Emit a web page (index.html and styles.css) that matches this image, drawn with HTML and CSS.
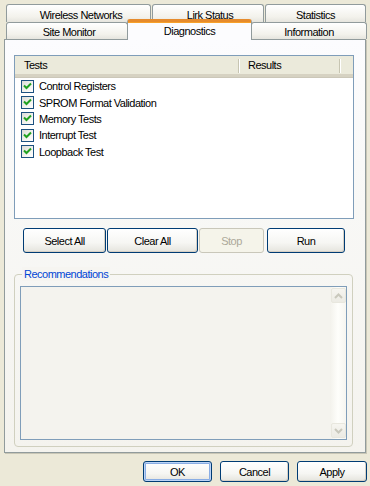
FILE: index.html
```html
<!DOCTYPE html>
<html>
<head>
<meta charset="utf-8">
<link rel="stylesheet" href="styles.css">
</head>
<body>
<div class="dialog">
  <div class="tabs">
    <div class="tabrow row1">
      <div class="tab t-wireless">Wireless Networks</div>
      <div class="tab t-link">Lirk Status</div>
      <div class="tab t-stats">Statistics</div>
    </div>
    <div class="tabrow row2">
      <div class="tab t-site">Site Monitor</div>
      <div class="tab t-diag selected">Diagnostics</div>
      <div class="tab t-info">Information</div>
    </div>
  </div>
  <div class="panel">
    <div class="list">
      <div class="list-head">
        <div class="col col-tests">Tests</div>
        <div class="col col-results">Results</div>
        <div class="col col-rest"></div>
      </div>
      <div class="rows">
        <div class="row"><span class="check"><svg width="11" height="11" viewBox="0 0 11 11"><path d="M2 4.5 L4.5 7 L9 2.5" fill="none" stroke="#21a121" stroke-width="2"/></svg></span>Control Registers</div>
        <div class="row"><span class="check"><svg width="11" height="11" viewBox="0 0 11 11"><path d="M2 4.5 L4.5 7 L9 2.5" fill="none" stroke="#21a121" stroke-width="2"/></svg></span>SPROM Format Validation</div>
        <div class="row"><span class="check"><svg width="11" height="11" viewBox="0 0 11 11"><path d="M2 4.5 L4.5 7 L9 2.5" fill="none" stroke="#21a121" stroke-width="2"/></svg></span>Memory Tests</div>
        <div class="row"><span class="check"><svg width="11" height="11" viewBox="0 0 11 11"><path d="M2 4.5 L4.5 7 L9 2.5" fill="none" stroke="#21a121" stroke-width="2"/></svg></span>Interrupt Test</div>
        <div class="row"><span class="check"><svg width="11" height="11" viewBox="0 0 11 11"><path d="M2 4.5 L4.5 7 L9 2.5" fill="none" stroke="#21a121" stroke-width="2"/></svg></span>Loopback Test</div>
      </div>
    </div>
    <div class="actions">
      <button class="btn b-select">Select All</button>
      <button class="btn b-clear">Clear All</button>
      <button class="btn b-stop" disabled>Stop</button>
      <button class="btn b-run">Run</button>
    </div>
    <div class="group">
      <span class="legend">Recommendations</span>
      <div class="textarea">
        <div class="scrollbar">
          <div class="sbtn"><svg width="9" height="6" viewBox="0 0 9 6"><path d="M1 5 L4.5 1.5 L8 5" fill="none" stroke="#c9c8bc" stroke-width="2"/></svg></div>
          <div class="strack"></div>
          <div class="sbtn"><svg width="9" height="6" viewBox="0 0 9 6"><path d="M1 1 L4.5 4.5 L8 1" fill="none" stroke="#c9c8bc" stroke-width="2"/></svg></div>
        </div>
      </div>
    </div>
  </div>
  <div class="footer">
    <button class="btn fb default">OK</button>
    <button class="btn fb">Cancel</button>
    <button class="btn fb f-apply">Apply</button>
  </div>
</div>
</body>
</html>
```

FILE: styles.css
```css
* { box-sizing: border-box; }
html, body {
  margin: 0;
  padding: 0;
  width: 370px;
  height: 486px;
  overflow: hidden;
  background: #ECE9D8;
  font-family: "Liberation Sans", Arial, sans-serif;
  font-size: 11px;
  letter-spacing: -0.5px;
  color: #000;
}
.dialog { width: 370px; height: 486px; }

/* tabs */
.tabs { height: 39px; position: relative; z-index: 2; }
.tabrow { display: flex; padding-left: 6px; }
.row1 { padding-top: 4px; height: 22px; gap: 1px; }
.row2 { height: 17px; gap: 1px; }
.tab {
  border: 1px solid #919B9C;
  border-bottom: none;
  border-radius: 3px 3px 0 0;
  background: linear-gradient(#FFFFFF, #F3F2EC 70%, #E6E5DE);
  display: flex;
  align-items: center;
  justify-content: center;
  white-space: nowrap;
}
.row1 .tab { height: 18px; padding-top: 2px; }
.row2 .tab { height: 17px; padding-top: 1px; }
.t-wireless { width: 145px; padding-left: 5px; }
.t-link { width: 112px; padding-left: 4px; }
.t-stats { width: 101px; }
.t-site { width: 122px; padding-left: 4px; }
.t-info { width: 116px; }
.t-diag { width: 121px; }
.row2 .tab.selected {
  position: relative;
  width: 125px;
  height: 21px;
  margin: -3px -2px 0 -2px;
  background: #FCFCFE;
  border-top: 3px solid #FFC83C;
  box-shadow: inset 0 1px 0 #F7A12A;
  border-color: #F0B060 #919B9C #919B9C #919B9C;
  border-top-color: #E68B2C;
  align-items: flex-start;
  padding-top: 3px;
  z-index: 3;
}

/* panel */
.panel {
  margin-left: 4px;
  width: 362px;
  height: 414px;
  border: 1px solid #919B9C;
  box-shadow: 1px 1px 0 #C8C6B6;
  background: linear-gradient(#FCFCFE, #F8F8F6 40%, #F4F3EE);
  padding: 15px 0 0 9px;
}

.list {
  width: 340px;
  height: 164px;
  border: 1px solid #7F9DB9;
  background: #FFFFFF;
}
.list-head {
  display: flex;
  height: 21px;
  background: #EBEADB;
  border-bottom: 3px solid #D6D2C2;
  box-shadow: 0 1px 0 #CBC7B8;
}
.col {
  height: 18px;
  display: flex;
  align-items: center;
  padding-left: 9px;
  position: relative;
}
.col-tests { width: 224px; }
.col-results { width: 101px; }
.col-rest { flex: 1; }
.col-tests::after, .col-results::after {
  content: "";
  position: absolute;
  right: 0;
  top: 3px;
  height: 14px;
  width: 1px;
  background: #C7C5B2;
  box-shadow: 1px 0 0 #FFFFFF;
}
.rows { padding-top: 1px; padding-left: 6px; }
.row {
  height: 16.4px;
  display: flex;
  align-items: center;
  white-space: nowrap;
}
.check {
  width: 13px;
  height: 13px;
  border: 1px solid #1C5180;
  background: linear-gradient(135deg, #DCDCD7, #F4F4F0 60%, #FFFFFF);
  margin-right: 5px;
  display: flex;
  align-items: center;
  justify-content: center;
  flex: none;
}

/* buttons */
.actions {
  display: flex;
  margin: 9px 0 0 9px;
  gap: 1px;
}
.btn {
  font-family: "Liberation Sans", Arial, sans-serif;
  font-size: 11px;
  letter-spacing: -0.5px;
  color: #000;
  height: 25px;
  border: 1px solid #003C74;
  border-radius: 3px;
  background: linear-gradient(#FFFFFF, #F6F6F3 60%, #E5E4DD);
  box-shadow: inset -1px -1px 0 #D6D0C5;
  padding: 0;
  margin: 0;
}
.b-select { width: 83px; }
.b-clear { width: 91px; }
.b-stop { width: 65px; }
.b-run { width: 78px; margin-left: 2px; }
.btn:disabled {
  color: #ACA899;
  border-color: #C9C7BA;
  background: #F5F4EA;
  box-shadow: none;
}

/* group */
.group {
  position: relative;
  margin-top: 21px;
  width: 339px;
  height: 173px;
  border: 1px solid #D0D0BF;
  border-radius: 4px;
  padding: 11px 0 0 5px;
}
.legend {
  position: absolute;
  left: 7px;
  top: -8px;
  padding: 0 2px;
  background: #F6F5F1;
  color: #0046D5;
  line-height: 14px;
}
.textarea {
  width: 327px;
  height: 154px;
  border: 1px solid #7F9DB9;
  background: #F4F3EE;
  display: flex;
  justify-content: flex-end;
}
.scrollbar {
  width: 16px;
  height: 100%;
  padding: 1px 0 1px 1px;
  background: linear-gradient(90deg, #F3F2EC, #FEFEFB 50%, #F6F5F0);
  display: flex;
  flex-direction: column;
}
.sbtn {
  height: 15px;
  width: 15px;
  border: 1px solid #E8E7DE;
  border-radius: 2px;
  background: linear-gradient(#F6F5F0, #ECEBE4);
  display: flex;
  align-items: center;
  justify-content: center;
}
.strack { flex: 1; }

/* footer */
.footer {
  display: flex;
  justify-content: flex-end;
  gap: 8px;
  padding: 8px 3px 0 0;
}
.fb { width: 69px; height: 21px; }
.f-apply { width: 70px; }
.default {
  box-shadow: inset 0 0 0 1px #BCD4F6, inset 0 0 0 2px #89ADE4;
}
```
